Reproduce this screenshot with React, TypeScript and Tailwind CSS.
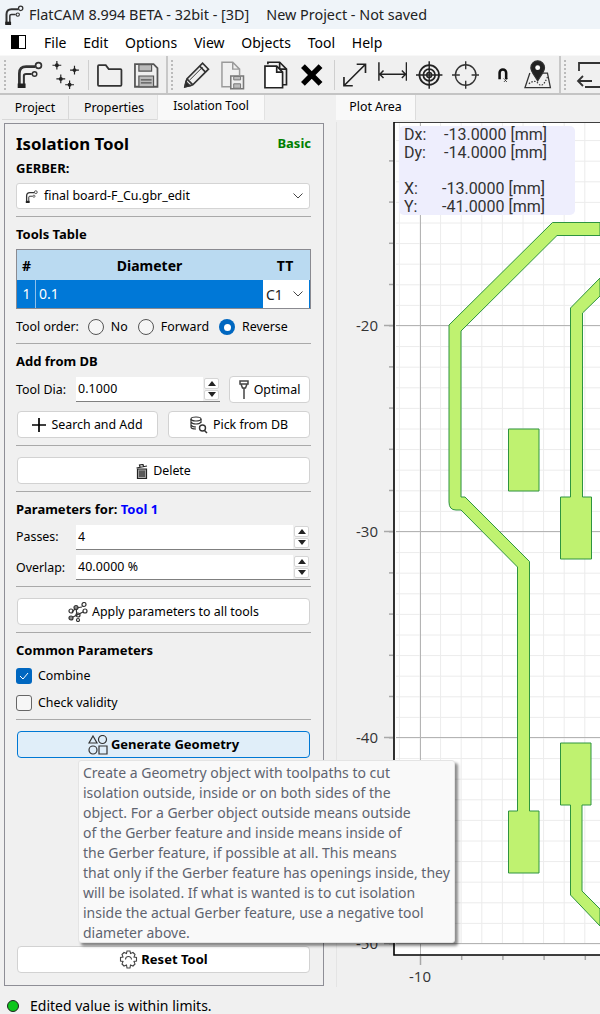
import * as React from "react"

function Logo({ size = 24 }: { size?: number }) {
  return (
    <svg width={size} height={size} viewBox="0 0 24 24" fill="none" stroke="#333" strokeWidth="2">
      <path d="M3 23V11Q3 5 9 5H17" strokeWidth="2.4" />
      <circle cx="20" cy="4" r="2.6" strokeWidth="1.5" />
      <path d="M7 23V13Q7 11.500 9 11.500H14" strokeWidth="1.8" />
      <circle cx="16.500" cy="11.500" r="2" strokeWidth="1.300" />
      <path d="M1.500 20h7v4h-7z" fill="#222" stroke="none" />
    </svg>
  )
}

function ToolbarIcons() {
  const k = "#222"
  return (
    <>
      <div className="ml-[10px] w-[30px]"><Logo size={27} /></div>
      <svg className="ml-[6px]" width="30" height="28" viewBox="0 0 30 28" stroke={k} strokeWidth="1.200">
        {[[6, 4], [24, 9], [10, 18], [19, 24]].map(([x, y]) => (
          <g key={`${x}-${y}`}>
            <path d="M-4.500 0H4.500M0 -4.500V4.500" transform={`translate(${x} ${y})`} />
            <circle cx={x} cy={y} r="2" fill={k} stroke="none" />
          </g>
        ))}
      </svg>
      <div className="ml-[7px] mr-[7px] h-[30px] w-px bg-[#cfcfcf]" />
      <svg width="28" height="26" viewBox="0 0 28 26" fill="none" stroke="#333" strokeWidth="1.800">
        <path d="M2 23V4Q2 3 3 3H10L13 7H25Q26 7 26 8V23Q26 24 25 24H3Q2 24 2 23Z" />
      </svg>
      <svg className="ml-[10px]" width="26" height="26" viewBox="0 0 26 26" fill="none" stroke="#555" strokeWidth="1.800">
        <path d="M2 2H21L25 6V25H2Z" />
        <path d="M6 2.500H19V9H6Z" fill="#bbb" strokeWidth="1.200" />
        <path d="M6 14H21V25H6Z" fill="#bbb" strokeWidth="1.200" />
        <path d="M8 18H19M8 21H19" strokeWidth="1.200" />
      </svg>
      <div className="ml-[7px] h-[39px] w-[2px] bg-[#c8c8c8]" />
      <div className="ml-[3px] h-[30px] w-[2px] border-l-2 border-dotted border-[#bbb]" />
      <svg className="ml-[10px]" width="28" height="28" viewBox="0 0 28 28" fill="none" stroke="#333" strokeWidth="1.700">
        <path d="M2 26L4 18L20 2L26 8L10 24Z" />
        <path d="M17 5L23 11M4 18L10 24" />
        <path d="M2 26L3 21L7 25Z" fill="#222" />
        <path d="M7 19L20 6" strokeWidth="1" />
      </svg>
      <svg className="ml-[10px]" width="26" height="30" viewBox="0 0 26 30" fill="none" stroke="#9a9a9a" strokeWidth="1.500">
        <path d="M11 27H2V2H13L20 9V15M13 2V9H20" />
        <path d="M11 16H24V29H11Z" stroke="#777" strokeWidth="1.600" />
        <path d="M14 16.500H21V20H14ZM14 24H21V28.500H14Z" fill="#bbb" stroke="#777" strokeWidth="1" />
      </svg>
      <svg className="ml-[18px]" width="26" height="30" viewBox="0 0 26 30" fill="none" stroke="#222" strokeWidth="1.700">
        <path d="M5 4V2H17L24 9V25H20" />
        <path d="M17 2V9H24" />
        <path d="M2 6H14L20 12V28H2Z" fill="#fff" />
        <path d="M14 6V12H20" />
      </svg>
      <svg className="ml-[11px]" width="24" height="24" viewBox="0 0 24 24" stroke="#000" strokeWidth="5.500">
        <path d="M3 3L21 21M21 3L3 21" />
      </svg>
      <div className="ml-[11px] mr-[7px] h-[30px] w-px bg-[#cfcfcf]" />
      <svg width="26" height="26" viewBox="0 0 26 26" fill="none" stroke="#222" strokeWidth="1.700">
        <path d="M2 24L24 2M15 2H24V11M2 15V24H11" />
      </svg>
      <svg className="ml-[10px] -translate-y-[3px]" width="30" height="21" viewBox="0 0 32 22" fill="none" stroke="#222" strokeWidth="1.600">
        <path d="M1 1V21M31 1V21M2 14H30M6 10L2 14L6 18M26 10L30 14L26 18" />
      </svg>
      <svg className="ml-[9px]" width="27" height="28" viewBox="0 0 27 28" fill="none" stroke="#222" strokeWidth="1.500">
        <circle cx="13.500" cy="14" r="10" strokeWidth="1.800" />
        <circle cx="13.500" cy="14" r="6" strokeWidth="1.800" />
        <circle cx="13.500" cy="14" r="2.500" />
        <path d="M0 14H27M13.500 0V28" />
      </svg>
      <svg className="ml-[9px]" width="28" height="28" viewBox="0 0 28 28" fill="none" stroke="#333" strokeWidth="1.400">
        <circle cx="14" cy="14" r="10.500" />
        <path d="M0 14H8M20 14H28M14 0V8M14 20V28" />
      </svg>
      <svg className="ml-[18px]" width="12" height="16" viewBox="0 0 16 22" fill="none" stroke="#111">
        <path d="M3.500 17V8A4.500 4.500 0 0 1 12.500 8V17" strokeWidth="3.500" />
        <path d="M9 16l5 5M14 16l-5 5" strokeWidth="1.300" strokeDasharray="1.500 1" />
      </svg>
      <svg className="ml-[14px]" width="30" height="30" viewBox="0 0 30 30" fill="none" stroke="#333" strokeWidth="1.200">
        <path d="M7 13L2 28H28L25 13H20" strokeWidth="1.300" />
        <path d="M6 24Q12 19 16 24T25 17" strokeDasharray="1.500 1.500" />
        <path d="M15 21C10 13 8 11 8 7.500A7 7 0 0 1 22 7.500C22 11 20 13 15 21Z" fill="#222" />
        <circle cx="15" cy="7.500" r="2.500" fill="#fff" stroke="none" />
      </svg>
      <div className="ml-[7px] h-[39px] w-[2px] bg-[#c8c8c8]" />
      <div className="ml-[3px] h-[30px] w-[2px] shrink-0 border-l-2 border-dotted border-[#bbb]" />
      <svg className="ml-[10px] shrink-0" width="24" height="28" viewBox="0 0 24 28" fill="none" stroke="#333" strokeWidth="1.800">
        <path d="M3 10V2H24M2 20H16M7 15L2 20L7 25M24 26H9" />
      </svg>
    </>
  )
}

function Hr({ className = "" }: { className?: string }) {
  return <div className={`h-px w-[295px] bg-[#a9a9a9] ${className}`} />
}

function Btn({ className = "", active, children }: { className?: string; active?: boolean; children: React.ReactNode }) {
  return (
    <div className={`flex h-[27px] items-center justify-center rounded-[4px] border ${active ? "border-[#0078d4] bg-[#e0eef9]" : "border-[#d2d2d2] bg-white"} ${className}`}>
      {children}
    </div>
  )
}

function Spin({ value, className = "" }: { value: string; className?: string }) {
  return (
    <div className={`flex h-[25px] items-stretch border-b border-[#7f7f7f] bg-white ${className}`}>
      <div className="flex flex-1 items-center pl-[2px] pt-px tracking-[0.1px]">{value}</div>
      <div className="flex w-[17px] flex-col gap-[1px] bg-[#f0f0f0] p-[1px]">
        <div className="flex flex-1 items-center justify-center rounded-[2px] border border-[#d5d5d5] bg-white">
          <svg width="8" height="5" viewBox="0 0 8 5"><path d="M4 0L8 5H0Z" fill="#222" /></svg>
        </div>
        <div className="flex flex-1 items-center justify-center rounded-[2px] border border-[#d5d5d5] bg-white">
          <svg width="8" height="5" viewBox="0 0 8 5"><path d="M4 5L0 0H8Z" fill="#222" /></svg>
        </div>
      </div>
    </div>
  )
}

function Chevron({ className = "" }: { className?: string }) {
  return (
    <svg className={className} width="10" height="6" viewBox="0 0 10 6" fill="none" stroke="#444" strokeWidth="1">
      <path d="M0.500 0.500L5 5L9.500 0.500" />
    </svg>
  )
}

function Radio({ label, checked }: { label: string; checked?: boolean }) {
  return (
    <div className="flex items-center gap-[7px]">
      {checked ? (
        <div className="flex h-[16px] w-[16px] items-center justify-center rounded-full bg-[#0067c0]">
          <div className="h-[7px] w-[7px] rounded-full bg-white" />
        </div>
      ) : (
        <div className="h-[16px] w-[16px] rounded-full border border-[#555] bg-[#f6f6f6]" />
      )}
      <span>{label}</span>
    </div>
  )
}

function Plot() {
  const minorX: number[] = []
  for (let x = 399.4; x < 600; x += 20.6) minorX.push(x)
  const minorY: number[] = []
  for (let y = 140.6; y < 955; y += 20.6) minorY.push(y)
  const tickY: number[] = []
  for (let y = 160.9; y < 955; y += 41.2) tickY.push(y)
  const tickX: number[] = []
  for (let x = 420; x < 600; x += 41.2) tickX.push(x)
  const labels: [string, number][] = [["-20", 325], ["-30", 531], ["-40", 737], ["-50", 943]]

  return (
    <svg width="262" height="865" viewBox="338 122 262 865" className="block shrink-0">
      <rect x="394" y="122" width="206" height="833" fill="#fff" />
      {minorX.map((x) => <path key={x} d={`M${x} 123V943`} stroke="#ececec" strokeWidth="1" />)}
      {minorY.map((y) => <path key={y} d={`M396 ${y}H600`} stroke="#ececec" strokeWidth="1" />)}
      <path d="M420.500 123V955M396 325.500H600M396 531.500H600M396 737.500H600M396 943.500H600" stroke="#b4b4b4" strokeWidth="1" />
      <g fill="#bff270" stroke="#2e9440" strokeWidth="1">
        <path d="M600 222.500H552.500L449 325V502Q449 510 456 510H461L517.500 567V811H508.500V873H539V811H529.500V561.500L465 497H461V331L557 235.500H600Z" />
        <path d="M508.500 429H539V491H508.500Z" />
        <path d="M600 278L570.500 308V497H560.500V559H591.500V497H582.500V313L600 296Z" />
        <path d="M560.500 743H591V805H582V891L600 909V926L570.500 895V805H560.500Z" />
      </g>
      <path d="M394 122V955H600M394 122H600" fill="none" stroke="#000" strokeWidth="1.600" />
      {tickY.map((y) => <path key={y} d={`M389 ${y}H393`} stroke="#a8a8a8" strokeWidth="1.500" />)}
      {labels.map(([t, y]) => (
        <g key={t}>
          <path d={`M384 ${y + 0.5}H393`} stroke="#a8a8a8" strokeWidth="1.500" />
          <text x="378" y={y + 6} textAnchor="end" fontSize="15" fill="#333" fontFamily="'Open Sans', sans-serif">{t}</text>
        </g>
      ))}
      {tickX.map((x) => <path key={x} d={`M${x + 0.5} 956V${x === 420 ? 965 : 960}`} stroke="#a8a8a8" strokeWidth="1.500" />)}
      <text x="420" y="982" textAnchor="middle" fontSize="15" fill="#333" fontFamily="'Open Sans', sans-serif">-10</text>
    </svg>
  )
}

export default function App() {
  return (
    <div className="relative flex h-[1014px] w-[600px] flex-col overflow-hidden bg-[#f0f0f0] font-['Noto_Sans',sans-serif] text-[12.4px] text-black">
      {/* title bar */}
      <div className="flex h-[29px] shrink-0 items-center bg-[#eff4f9] pl-[4px] text-[14.4px] text-[#222]">
        <Logo size={20} />
        <span className="ml-[5px]">FlatCAM 8.994 BETA - 32bit - [3D]</span>
        <span className="ml-[17px]">New Project - Not saved</span>
      </div>

      {/* menu bar */}
      <div className="flex h-[26px] shrink-0 items-center bg-white text-[14px]">
        <div className="ml-[11px] flex h-[14px] w-[15px] border border-black">
          <div className="w-[7px] bg-black" />
        </div>
        <div className="ml-[18px] flex gap-[16.8px]">
          <span>File</span>
          <span>Edit</span>
          <span>Options</span>
          <span>View</span>
          <span>Objects</span>
          <span>Tool</span>
          <span>Help</span>
        </div>
      </div>

      {/* toolbar */}
      <div className="flex h-[40px] shrink-0 items-center overflow-hidden border-b-2 border-t border-b-[#c4c4c4] border-t-[#f8f8f8]">
        <div className="ml-[4px] h-[30px] w-[2px] shrink-0 border-l-2 border-dotted border-[#bbb]" />
        <ToolbarIcons />
      </div>

      {/* main */}
      <div className="flex min-h-0 flex-1">
        <div className="w-[336px] shrink-0">
          <div className="flex h-[25px] items-end pl-[2px] text-[12.4px]">
            <div className="flex h-[24px] w-[67px] items-center justify-center border-b border-r border-[#d8d8d8] pt-[2px]">Project</div>
            <div className="flex h-[24px] w-[88px] items-center justify-center border-b border-[#d8d8d8] pl-[2px] pt-[2px]">Properties</div>
            <div className="flex h-[25px] w-[108px] items-center justify-center border-x border-[#e2e2e2] bg-[#f9f9f9] pb-[3px] text-[12px]">Isolation Tool</div>
          </div>
          <div className="ml-[4px] mt-[3px] h-[863px] w-[320px] border border-[#8e8e96] pl-[11px]">
            <div className="flex h-[31px] w-[295px] items-center justify-between pt-[8px]">
              <span className="text-[16.8px] font-bold">Isolation Tool</span>
              <span className="text-[13px] font-bold text-[#008000]">Basic</span>
            </div>
            <div className="mt-[5px] text-[13px] font-bold leading-[16px]">GERBER:</div>
            <div className="mt-[7px] flex h-[26px] w-[294px] items-center rounded-[3px] border border-[#d4d4d4] bg-white pl-[8px] pr-[6px]">
              <Logo size={13} />
              <span className="ml-[6px] flex-1">final board-F_Cu.gbr_edit</span>
              <Chevron />
            </div>
            <Hr className="mt-[7px]" />
            <div className="mt-[9px] text-[13px] font-bold leading-[16px]">Tools Table</div>
            <div className="mt-[7px] w-[295px] border border-[#8a8a90]">
              <div className="flex h-[30px] items-center bg-[#badaf1] text-[14px] font-bold">
                <span className="w-[18px] pl-[5px]">#</span>
                <span className="w-[229px] text-center">Diameter</span>
                <span className="flex-1 pr-[4px] text-center">TT</span>
              </div>
              <div className="flex h-[28px] items-stretch bg-[#0078d7] pl-px text-[14px] text-white">
                <span className="flex w-[18px] items-center justify-center border-r border-[#8fc0ea] pb-px">1</span>
                <span className="flex flex-1 items-center pb-px pl-[3px]">0.1</span>
                <span className="mr-[1px] flex w-[46px] items-center justify-between bg-white pl-[3px] pr-[6px] text-[#222]">C1<Chevron /></span>
              </div>
            </div>
            <div className="mt-[9px] flex h-[18px] items-center leading-none">
              <span>Tool order:</span>
              <div className="ml-[9px] flex gap-[10px]">
                <Radio label="No" />
                <Radio label="Forward" />
                <Radio label="Reverse" checked />
              </div>
            </div>
            <Hr className="mt-[7px]" />
            <div className="mt-[9px] text-[13px] font-bold leading-[16px]">Add from DB</div>
            <div className="mt-[8px] flex h-[25px] items-center">
              <span className="w-[60px] pt-px">Tool Dia:</span>
              <Spin value="0.1000" className="w-[144px]" />
              <Btn className="ml-[9px] h-[24px] w-[81px] gap-[5px] pt-px">
                <svg width="10" height="20" viewBox="0 0 10 20" fill="none" stroke="#444">
                  <path d="M1 1H9V4H1ZM2 4L3.500 8H6.500L8 4M5 8V19" strokeWidth="1.500" />
                </svg>
                Optimal
              </Btn>
            </div>
            <div className="mt-[9px] flex gap-[10px] pl-px">
              <Btn className="w-[141px] gap-[5px] pt-px">
                <svg width="14" height="14" viewBox="0 0 14 14" stroke="#000" strokeWidth="1.700"><path d="M7 0V14M0 7H14" /></svg>
                Search and Add
              </Btn>
              <Btn className="w-[142px] gap-[5px] pt-px">
                <svg width="18" height="18" viewBox="0 0 18 18" fill="none" stroke="#333" strokeWidth="1.200">
                  <ellipse cx="6" cy="3" rx="5" ry="2" />
                  <path d="M1 3V11Q1 13 6 13M11 3V7M1 6Q2 8 6 8T11 6M1 9Q2 11 6 11" />
                  <circle cx="12.500" cy="12" r="3" strokeWidth="1.400" />
                  <path d="M14.500 14.500L17 17" strokeWidth="1.500" />
                </svg>
                Pick from DB
              </Btn>
            </div>
            <Hr className="mt-[7px]" />
            <Btn className="ml-px mt-[11px] w-[293px] gap-[5px] pt-px">
              <svg width="12" height="15" viewBox="0 0 12 15" fill="none" stroke="#222" strokeWidth="1.200">
                <path d="M0.500 4L11 2M4 3L3.500 1L7 0.500L7.500 2.500" />
                <path d="M1.500 5H10.500V14.500H1.500Z" fill="#aaa" />
                <path d="M4 6.500V13M6 6.500V13M8 6.500V13" />
              </svg>
              Delete
            </Btn>
            <Hr className="mt-[7px]" />
            <div className="mt-[9px] text-[13px] font-bold leading-[16px]">Parameters for: <span className="text-[#0000ff]">Tool 1</span></div>
            <div className="mt-[8px] flex items-center">
              <span className="w-[60px]">Passes:</span>
              <Spin value="4" className="w-[234px]" />
            </div>
            <div className="mt-[5px] flex items-center">
              <span className="w-[60px] pt-px">Overlap:</span>
              <Spin value="40.0000 %" className="w-[234px]" />
            </div>
            <Hr className="mt-[6px]" />
            <Btn className="ml-px mt-[11px] w-[293px] gap-[4px] pt-px">
              <svg width="20" height="20" viewBox="0 0 20 20" fill="none" stroke="#333" strokeWidth="1.200">
                <path d="M4 10L8 6L14 5M8 6L9 13L15 10M9 13L3 16" />
                <circle cx="3" cy="9" r="2" /><circle cx="8" cy="5.500" r="2" fill="#888" /><circle cx="16" cy="2.500" r="2" />
                <circle cx="17" cy="9" r="2" /><circle cx="10" cy="13" r="2" /><circle cx="3" cy="16" r="2" fill="#888" /><circle cx="10" cy="18" r="1.500" />
              </svg>
              Apply parameters to all tools
            </Btn>
            <Hr className="mt-[7px]" />
            <div className="mt-[9px] text-[13px] font-bold leading-[16px]">Common Parameters</div>
            <div className="mt-[10px] flex h-[16px] items-center gap-[6px]">
              <div className="flex h-[16px] w-[16px] items-center justify-center rounded-[3px] bg-[#0067c0]">
                <svg width="10" height="8" viewBox="0 0 10 8" fill="none" stroke="#fff" strokeWidth="1"><path d="M1 4L4 7L9 1" /></svg>
              </div>
              Combine
            </div>
            <div className="mt-[11px] flex h-[16px] items-center gap-[6px]">
              <div className="h-[16px] w-[16px] rounded-[3px] border border-[#666] bg-[#f6f6f6]" />
              Check validity
            </div>
            <Hr className="mt-[8px]" />
            <Btn active className="ml-px mt-[11px] w-[293px] gap-[3px] text-[13px] font-bold">
              <svg width="20" height="20" viewBox="0 0 20 20" fill="none" stroke="#333" strokeWidth="1.200">
                <path d="M5 1L9 8H1Z" /><circle cx="14.500" cy="4.500" r="4" /><circle cx="5" cy="15" r="4" /><path d="M11 11H19V19H11Z" />
              </svg>
              Generate Geometry
            </Btn>
            <Btn className="ml-px mt-[188px] w-[293px] gap-[3px] text-[13px] font-bold">
              <svg width="19" height="19" viewBox="0 0 19 19" fill="none" stroke="#444" strokeWidth="1.100">
                <path d="M8 1H11L11.500 3.500L14 2.500L16 4.500L15 7L17.500 7.500V11L15 11.500L16 14L14 16L11.500 15L11 18H8L7.500 15L5 16L3 14L4 11.500L1.500 11V7.500L4 7L3 4.500L5 2.500L7.500 3.500Z" />
                <path d="M6.500 9.500A3 3 0 1 1 12.500 9.500" />
              </svg>
              Reset Tool
            </Btn>
          </div>
        </div>

        <div className="min-w-0 flex-1">
          <div className="flex h-[25px] items-end">
            <div className="flex h-[25px] w-[80px] items-center justify-center border-r border-[#dcdcdc] bg-[#f9f9f9]">Plot Area</div>
          </div>
          <div className="relative mt-[2px] border-l border-[#e4e4e4] pl-px">
            <Plot />
            <div className="absolute left-[62px] top-[4px] h-[89px] w-[176px] rounded-[5px] bg-[#eeeefd] pl-[5px] font-['Roboto',sans-serif] text-[16px] leading-[18px] text-[#333]">
              <div className="flex"><span className="w-[40px]">Dx:</span><span>-13.0000 [mm]</span></div>
              <div className="flex"><span className="w-[40px]">Dy:</span><span>-14.0000 [mm]</span></div>
              <div className="h-[18px]" />
              <div className="flex"><span className="w-[38px]">X:</span><span>-13.0000 [mm]</span></div>
              <div className="flex"><span className="w-[38px]">Y:</span><span>-41.0000 [mm]</span></div>
            </div>
          </div>
        </div>
      </div>

      {/* status bar */}
      <div className="flex h-[24px] shrink-0 items-center pl-[7px] pt-[7px] text-[14px]">
        <div className="h-[12px] w-[12px] rounded-full border border-[#222] bg-[#0dc61b]" />
        <span className="ml-[11px]">Edited value is within limits.</span>
      </div>

      {/* hover tooltip */}
      <div className="absolute left-[78px] top-[760px] h-[183px] w-[377px] rounded-[3px] border border-[#e4e4e4] bg-[#f9f9f9] pl-[4px] pt-[2px] text-[14px] leading-[20px] text-[#5f6470] shadow-[3px_3px_3px_rgba(0,0,0,0.45)]">
        <div>Create a Geometry object with toolpaths to cut</div>
        <div>isolation outside, inside or on both sides of the</div>
        <div>object. For a Gerber object outside means outside</div>
        <div>of the Gerber feature and inside means inside of</div>
        <div>the Gerber feature, if possible at all. This means</div>
        <div>that only if the Gerber feature has openings inside, they</div>
        <div>will be isolated. If what is wanted is to cut isolation</div>
        <div>inside the actual Gerber feature, use a negative tool</div>
        <div>diameter above.</div>
      </div>
    </div>
  )
}
